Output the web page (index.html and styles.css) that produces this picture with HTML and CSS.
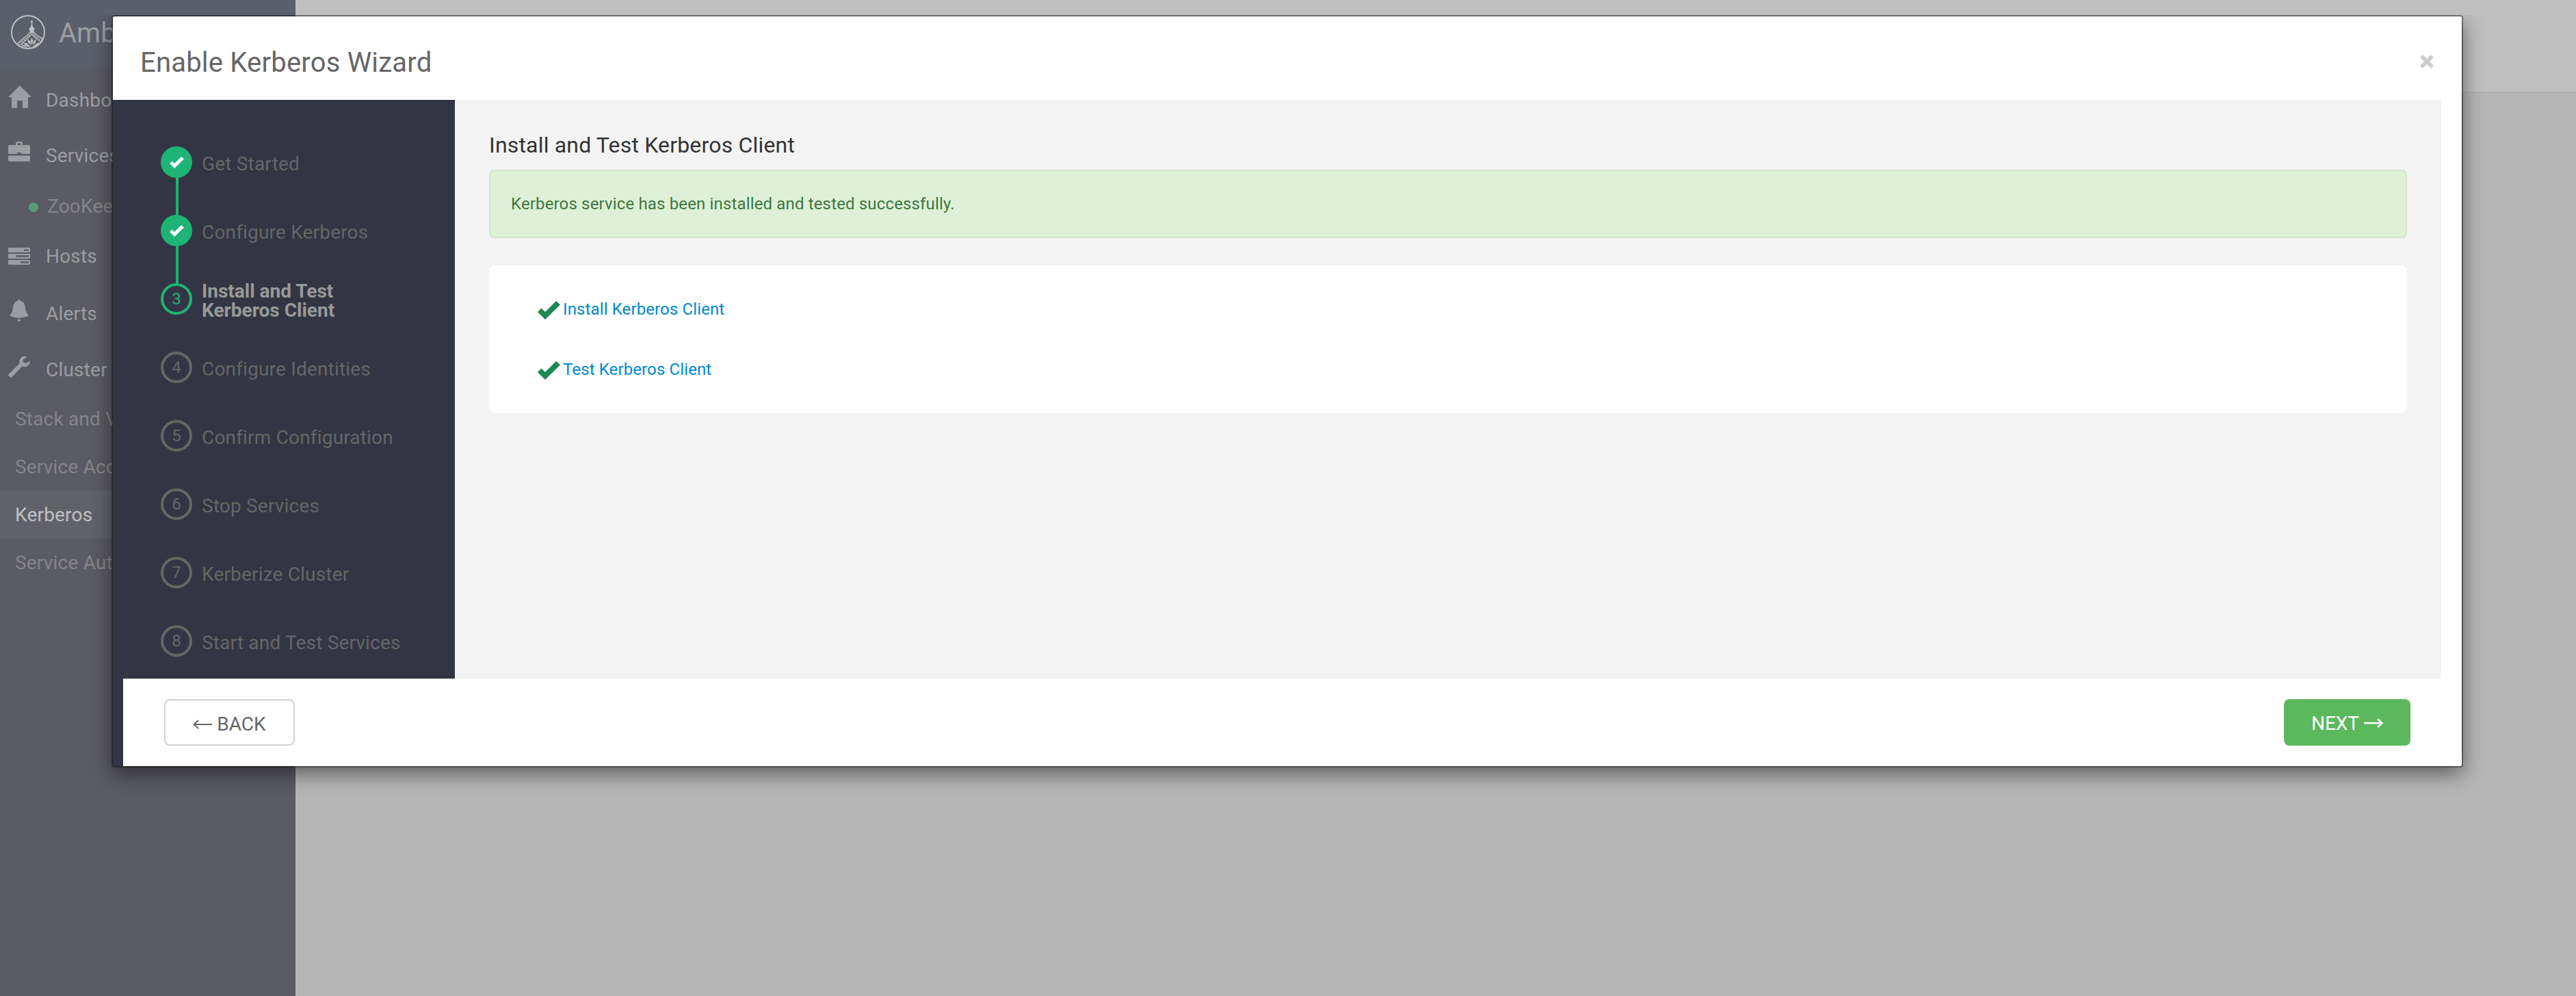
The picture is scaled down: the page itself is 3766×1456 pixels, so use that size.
FILE: index.html
```
<!DOCTYPE html>
<html lang="en">
<head>
  <meta charset="UTF-8" />
  <meta name="viewport" content="width=device-width, initial-scale=1.0"/>
  <title>Enable Kerberos Wizard</title>
  <link rel="stylesheet" href="styles.css">
</head>
<body>
  <!-- Shared icons -->
  <svg class="defs" width="0" height="0">
    <symbol id="check" viewBox="0 0 33 27">
      <path d="M0 16 L5.5 10.5 L11 16 L27 0 L33 5.5 L11 27 Z"/>
    </symbol>
  </svg>

  <!-- Page behind the modal -->
  <div class="page">
    <div class="sidebar">
      <div class="brand">
        <svg class="logo" width="50" height="50" viewBox="0 0 50 50">
          <circle cx="25" cy="25" r="24" fill="none" stroke="#bdbebf" stroke-width="2"/>
          <path d="M30.5 8 V18" stroke="#bdbebf" stroke-width="1.6"/>
          <circle cx="30.5" cy="9.5" r="1.4" fill="#bdbebf"/>
          <path d="M29.5 15 h2 l.8 2.5 c3 2 2.2 4 .7 5.5 v3 h-5 v-3 c-1.5 -1.5 -2.3 -3.5 .7 -5.5 Z" fill="#bdbebf"/>
          <path d="M28 24 C25 31 16 34 9.5 42.5 M33 24 C35 29 40 31 47.5 35" fill="none" stroke="#bdbebf" stroke-width="1.5"/>
          <path d="M29.3 26.5 C26 32 18 36 12 43.5 M32 26.5 C34 31 40 34 46.5 37.5" fill="none" stroke="#bdbebf" stroke-width="1.8" stroke-dasharray="1.8 1.4"/>
          <path d="M30.5 27 C27 34 20 37 14.5 44 M30.5 27 C33 33 39 36 45.5 40" fill="none" stroke="#bdbebf" stroke-width="1.3"/>
          <path d="M30.5 33 l2 5 -2 6 -2 -6 Z M24.5 35.5 l3.5 3 1 5 -4 -3 Z M36.5 35.5 l-3.5 3 -1 5 4 -3 Z M18 41 l5 0 5 4.5 -6 -1 Z M43 40 l-5 1.5 -5 4 6 -1 Z" fill="#bdbebf"/>
          <path d="M15.5 45.5 q9 -2.5 14 3 M41 43.5 q-6 0 -10 5 M17 43.5 l6 4" fill="none" stroke="#bdbebf" stroke-width="1.3"/>
        </svg>
        <span>Ambari</span>
      </div>
      <div class="nav-item dashboard">
        <svg width="34" height="33" viewBox="0 0 34 33"><path d="M17 0 L34 17 H29 V33 H21 V22 H13 V33 H5 V17 H0 Z"/></svg>
        <span>Dashboard</span>
      </div>
      <div class="nav-item services">
        <svg width="32" height="29" viewBox="0 0 32 29"><path fill-rule="evenodd" d="M11 5 V2 Q11 0 13 0 H19 Q21 0 21 2 V5 H30 Q32 5 32 7 V18 H19 V16 H13 V18 H0 V7 Q0 5 2 5 Z M13.5 5 H18.5 V2.5 H13.5 Z M0 20.5 H32 V27 Q32 29 30 29 H2 Q0 29 0 27 Z"/></svg>
        <span>Services</span>
      </div>
      <div class="nav-item service">
        <i class="dot"></i>
        <span>ZooKeeper</span>
      </div>
      <div class="nav-item hosts">
        <svg width="32" height="25" viewBox="0 0 32 25"><path fill-rule="evenodd" d="M1 0 H31 L32 1 V6 L31 7 H1 L0 6 V1 Z M23 2.3 V4.7 H30 V2.3 Z M1 9 H31 L32 10 V15 L31 16 H1 L0 15 V10 Z M11 11.3 V13.7 H30 V11.3 Z M1 18 H31 L32 19 V24 L31 25 H1 L0 24 V19 Z M18 20.3 V22.7 H30 V20.3 Z"/></svg>
        <span>Hosts</span>
      </div>
      <div class="nav-item alerts">
        <svg width="32" height="32" viewBox="0 0 32 32"><path d="M14 2 Q14 0 16 0 Q18 0 18 2 C23 3 24.5 7 25 12 C25.5 18 27 20 30 23 Q29 25 16 27 Q3 25 2 23 C5 20 6.5 18 7 12 C7.5 7 9 3 14 2 Z M13.5 29 H18.5 Q18 32 16 32 Q14 32 13.5 29 Z"/></svg>
        <span>Alerts</span>
      </div>
      <div class="nav-item admin">
        <svg width="32" height="32" viewBox="0 0 32 32"><path d="M28 1.5 L22 5.5 L21.5 9.5 L25 11 L32 8 C32 13 28 16.5 23 16 L20.5 15.5 L5 31.5 Q4 32.5 3 31.5 L.5 29 Q-.5 28 .5 27 L16.5 11.5 C15 5 20 -1.5 28 1.5 Z"/></svg>
        <span>Cluster Admin</span>
      </div>
      <div class="sub-nav">
        <div class="sub-item">Stack and Versions</div>
        <div class="sub-item">Service Accounts</div>
        <div class="sub-item active">Kerberos</div>
        <div class="sub-item">Service Auto Start</div>
      </div>
    </div>
    <div class="main">
      <div class="topbar"></div>
    </div>
  </div>

  <!-- Wizard -->
  <div class="overlay">
    <div class="modal">
      <div class="modal-header">
        <h4>Enable Kerberos Wizard</h4>
        <svg class="close" width="20" height="20" viewBox="0 0 20 20"><path d="M2 2 L18 18 M18 2 L2 18"/></svg>
      </div>
      <div class="modal-body">
        <div class="steps">
          <div class="step done">
            <div class="marker"><div class="circle"><svg width="21" height="17"><use href="#check"/></svg></div><div class="line"></div></div>
            <div class="label">Get Started</div>
          </div>
          <div class="step done">
            <div class="marker"><div class="circle"><svg width="21" height="17"><use href="#check"/></svg></div><div class="line"></div></div>
            <div class="label">Configure Kerberos</div>
          </div>
          <div class="step current">
            <div class="marker"><div class="circle">3</div></div>
            <div class="label">Install and Test<br>Kerberos Client</div>
          </div>
          <div class="step">
            <div class="marker"><div class="circle">4</div></div>
            <div class="label">Configure Identities</div>
          </div>
          <div class="step">
            <div class="marker"><div class="circle">5</div></div>
            <div class="label">Confirm Configuration</div>
          </div>
          <div class="step">
            <div class="marker"><div class="circle">6</div></div>
            <div class="label">Stop Services</div>
          </div>
          <div class="step">
            <div class="marker"><div class="circle">7</div></div>
            <div class="label">Kerberize Cluster</div>
          </div>
          <div class="step">
            <div class="marker"><div class="circle">8</div></div>
            <div class="label">Start and Test Services</div>
          </div>
        </div>
        <div class="content">
          <h4>Install and Test Kerberos Client</h4>
          <div class="alert">Kerberos service has been installed and tested successfully.</div>
          <div class="panel">
            <div class="task"><svg width="33" height="27"><use href="#check"/></svg><a>Install Kerberos Client</a></div>
            <div class="task"><svg width="33" height="27"><use href="#check"/></svg><a>Test Kerberos Client</a></div>
          </div>
        </div>
      </div>
      <div class="modal-footer">
        <button class="btn back">
          <svg width="28" height="14" viewBox="0 0 28 14"><path d="M28 7 H1.5 M8 1 L1.5 7 L8 13"/></svg>
          <span>BACK</span>
        </button>
        <button class="btn next">
          <span>NEXT</span>
          <svg width="28" height="14" viewBox="0 0 28 14"><path d="M0 7 H26.5 M20 1 L26.5 7 L20 13"/></svg>
        </button>
      </div>
    </div>
  </div>
</body>
</html>
```
FILE: styles.css
```
* {
  box-sizing: border-box;
}
body {
  margin: 0;
  height: 1456px;
  overflow: hidden;
  font-family: Roboto, sans-serif;
  font-size: 28px;
}
h4 {
  margin: 0;
  font-weight: 400;
}
.defs {
  display: none;
}

/* page behind the modal */
.page {
  display: flex;
  height: 1456px;
}
.sidebar {
  width: 432px;
  background: #5b5b63;
  color: #9b9ea0;
  letter-spacing: 0.2px;
  white-space: nowrap;
}
.brand {
  display: flex;
  height: 102px;
  padding: 22px 0 0 16px;
  background: #5a5f6a;
  font-size: 40px;
  line-height: 54px;
  letter-spacing: 0;
}
.logo {
  margin-right: 20px;
}
.nav-item {
  display: flex;
  align-items: center;
  height: 74px;
  padding-left: 12px;
}
.nav-item svg {
  fill: #9b9ea0;
  margin-right: 23px;
}
.nav-item.dashboard {
  height: 88px;
}
.nav-item.dashboard svg {
  margin: 0 21px 9px 0;
}
.nav-item.services svg {
  margin-bottom: 11px;
}
.nav-item.service {
  padding-left: 42px;
  color: #858686;
}
.dot {
  width: 14px;
  height: 14px;
  margin: 4px 13px 0 0;
  border-radius: 50%;
  background: #579d79;
}
.nav-item.hosts {
  height: 72px;
}
.nav-item.alerts {
  height: 96px;
}
.nav-item.admin {
  height: 68px;
}
.alerts svg,
.admin svg {
  margin-bottom: 8px;
}
.sub-nav {
  margin-top: 3px;
}
.sub-item {
  height: 70px;
  padding: 1px 0 0 22px;
  line-height: 69px;
  color: #858686;
}
.sub-item.active {
  background: #61616a;
  color: #c1c1c2;
}
.main {
  flex: 1;
  background: #b6b6b6;
}
.topbar {
  height: 136px;
  background: #bfbfbf;
  border-bottom: 2px solid #b0b0b0;
}

/* modal */
.overlay {
  position: absolute;
  top: 22px;
  left: 0;
  right: 0;
  bottom: 0;
  overflow: hidden;
  padding: 1px 166px 0 164px;
}
.modal {
  height: 1098px;
  border: 1px solid rgba(0, 0, 0, 0.2);
  border-radius: 3px;
  background: #fff;
  background-clip: padding-box;
  box-shadow: 0 0 0 1px rgba(0, 0, 0, 0.3), 0 10px 30px rgba(0, 0, 0, 0.5);
}
.modal-header {
  display: flex;
  justify-content: space-between;
  align-items: center;
  height: 122px;
  padding: 12px 41px 0 40px;
  color: #666;
}
.modal-header h4 {
  font-size: 40px;
  letter-spacing: 0.2px;
}
.close {
  margin-bottom: 2px;
  fill: none;
  stroke: #ccc;
  stroke-width: 5.5;
}
.modal-body {
  display: flex;
  height: 846px;
  padding-right: 30px;
}

/* wizard steps */
.steps {
  width: 500px;
  padding: 68px 0 0 70px;
  overflow: hidden;
  background: #333544;
  color: #666;
}
.step {
  display: flex;
  gap: 14px;
  height: 100px;
}
.circle {
  display: flex;
  align-items: center;
  justify-content: center;
  width: 46px;
  height: 46px;
  border: 4px solid #666;
  border-radius: 50%;
  font-size: 24px;
}
.done .circle {
  background: #1eb475;
  border-color: #1eb475;
}
.circle svg {
  fill: #fff;
}
.line {
  width: 4px;
  height: 54px;
  margin-left: 22px;
  background: #1eb475;
}
.label {
  display: flex;
  align-items: center;
  height: 46px;
  margin-top: 3px;
  line-height: 28px;
  letter-spacing: 0.18px;
}
.current .circle {
  border-color: #1eb475;
  color: #1eb475;
}
.current .label {
  font-weight: 700;
  letter-spacing: 0;
  color: #999;
}

/* step content */
.content {
  flex: 1;
  padding: 30px 50px 0;
  background: #f3f3f3;
}
.content h4 {
  font-size: 32px;
  line-height: 72px;
  letter-spacing: 0.18px;
  color: #333;
}
.alert {
  height: 100px;
  padding-left: 30px;
  border: 2px solid #d0e9c6;
  border-radius: 8px;
  background: #dff0d8;
  color: #3c763d;
  font-size: 24px;
  line-height: 96px;
  letter-spacing: 0.15px;
}
.panel {
  height: 216px;
  margin-top: 40px;
  padding: 20px 0 0 71px;
  border-radius: 8px;
  background: #fff;
}
.task {
  display: flex;
  align-items: center;
  gap: 4px;
  height: 88px;
  color: #0088cc;
  font-size: 24px;
  letter-spacing: 0.12px;
}
.task svg {
  margin-top: 3px;
  fill: #1e8854;
}

/* footer covers everything but a strip of the steps column */
.modal-footer {
  display: flex;
  justify-content: space-between;
  height: 128px;
  padding: 30px 75px 0 60px;
  border-left: 15px solid #333544;
}
.btn {
  display: flex;
  align-items: center;
  justify-content: center;
  gap: 7px;
  height: 68px;
  padding: 0;
  border: 2px solid #cfd3d7;
  border-radius: 8px;
  background: #fff;
  color: #666;
  font-family: inherit;
  font-size: 28px;
}
.btn svg {
  fill: none;
  stroke: currentColor;
  stroke-width: 2;
}
.btn.back {
  width: 191px;
  padding-top: 5px;
}
.btn.next {
  width: 185px;
  padding-top: 2px;
  border-color: #5cb85c;
  background: #5cb85c;
  color: #fff;
}
.next svg {
  stroke-width: 2.5;
}
```
